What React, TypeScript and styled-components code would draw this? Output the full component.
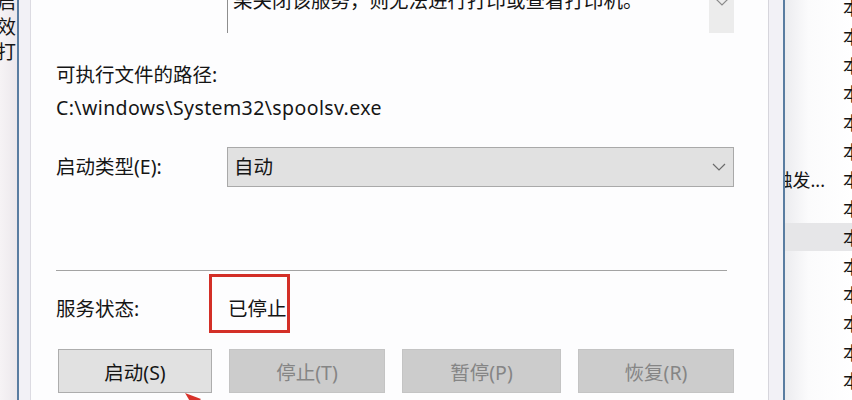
import React from 'react';
import styled, { createGlobalStyle } from 'styled-components';

const GlobalStyle = createGlobalStyle`
  html, body {
    margin: 0;
    padding: 0;
    background: #ffffff;
  }
  body {
    font-family: "Noto Sans", "Noto Sans CJK SC", sans-serif;
  }
`;

const leftRows = ['启', '效', '打'];
const rightRows = Array.from({ length: 15 }, (_, i) => i);

const Chevron = ({ color = '#6b6b6b' }: { color?: string }): JSX.Element => (
  <svg width="14" height="8" viewBox="0 0 14 8">
    <polyline points="1,1 7,7 13,1" fill="none" stroke={color} strokeWidth="1.2" />
  </svg>
);

const App = (): JSX.Element => {
  return (
    <Screen>
      <GlobalStyle />
      <BackLeft>
        {leftRows.map((ch) => (
          <BackLeftRow key={ch}>
            <span>{`服务${ch}`}</span>
          </BackLeftRow>
        ))}
      </BackLeft>

      <Dialog>
        <Content>
          <FieldRow>
            <span />
            <DescBox>
              <DescText>果关闭该服务，则无法进行打印或查看打印机。</DescText>
              <DescScroll>
                <Chevron color="#8a8a8a" />
              </DescScroll>
            </DescBox>
          </FieldRow>

          <PathLabel>可执行文件的路径:</PathLabel>
          <PathValue>C:\windows\System32\spoolsv.exe</PathValue>

          <FieldRow>
            <Label>启动类型(E):</Label>
            <Select>
              <span>自动</span>
              <Chevron />
            </Select>
          </FieldRow>

          <Separator />

          <StatusRow>
            <Label>服务状态:</Label>
            <StatusValue>已停止</StatusValue>
          </StatusRow>

          <ButtonRow>
            <ActionButton width={154}>启动(S)</ActionButton>
            <ActionButton width={156} disabled>
              停止(T)
            </ActionButton>
            <ActionButton width={159} disabled>
              暂停(P)
            </ActionButton>
            <ActionButton width={156} disabled>
              恢复(R)
            </ActionButton>
          </ButtonRow>
        </Content>
      </Dialog>

      <BackRight>
        {rightRows.map((i) => (
          <ServiceRow key={i} highlight={i === 8}>
            <StartCell>{i === 6 ? '手动(触发...' : ''}</StartCell>
            <LogonCell>本地系统</LogonCell>
          </ServiceRow>
        ))}
      </BackRight>

      <ArrowTip width="20" height="10" viewBox="0 0 20 10">
        <polygon points="0,0 16,6 12,10 6,10" fill="#d8332b" />
      </ArrowTip>
    </Screen>
  );
};

const Screen = styled.div`
  position: relative;
  width: 852px;
  height: 400px;
  display: flex;
  overflow: hidden;
  color: #151515;
  font-size: 19.5px;
`;

const BackLeft = styled.div`
  flex: 0 0 17px;
  width: 17px;
  min-width: 0;
  overflow: hidden;
  background: linear-gradient(to right, #f6f3f5, #ece8ec);
  display: flex;
  flex-direction: column;
  margin-top: -10px;
`;

const BackLeftRow = styled.div`
  height: 25px;
  display: flex;
  justify-content: flex-end;
  overflow: hidden;
  white-space: nowrap;
  font-size: 19px;
  line-height: 25px;
  padding-right: 1px;
`;

const Dialog = styled.div`
  flex: 0 0 768px;
  box-sizing: border-box;
  border-left: 2px solid #5a7da1;
  border-right: 2px solid #5a7da1;
  padding: 0 14px 0 11px;
  background: #f2f1f6;
  display: flex;
`;

const Content = styled.div`
  flex: 1;
  min-width: 0;
  background: #fdfdfe;
  border-left: 1px solid #dcdbe2;
  border-right: 1px solid #d6d5dc;
  padding: 0 34px 0 25px;
  display: flex;
  flex-direction: column;
`;

const FieldRow = styled.div`
  display: grid;
  grid-template-columns: 171px 1fr;
  align-items: center;
  margin-top: 27px;

  &:first-child {
    margin-top: -20px;
  }
`;

const DescBox = styled.div`
  height: 53px;
  border-left: 1px solid #8e8e8e;
  display: flex;
  justify-content: space-between;
  overflow: hidden;
`;

const DescText = styled.div`
  padding: 9px 0 0 5px;
  line-height: 24px;
  white-space: nowrap;
`;

const DescScroll = styled.div`
  flex: 0 0 25px;
  background: #ececec;
  display: flex;
  align-items: flex-end;
  justify-content: center;
  padding-bottom: 27px;
  box-sizing: border-box;
`;

const Label = styled.div`
  line-height: 24px;
  white-space: nowrap;
`;

const PathLabel = styled(Label)`
  margin-top: 30px;
`;

const PathValue = styled(Label)`
  margin-top: 9px;
  letter-spacing: 0.4px;
`;

const Select = styled.div`
  height: 40px;
  box-sizing: border-box;
  background: #e1e1e1;
  border: 1px solid #a9a9a9;
  display: flex;
  align-items: center;
  justify-content: space-between;
  padding: 0 7px 0 6px;
  line-height: 24px;
`;

const Separator = styled.div`
  height: 1px;
  background: #a3a3a3;
  margin-top: 83px;
  margin-right: 7px;
`;

const StatusRow = styled.div`
  display: grid;
  grid-template-columns: 171px 1fr;
  height: 59px;
  margin-top: 3px;
  padding-top: 23px;
  box-sizing: border-box;
`;

const StatusValue = styled.div`
  position: relative;
  line-height: 24px;
  padding-left: 1px;

  &::before {
    content: '';
    position: absolute;
    left: -18px;
    top: -23px;
    width: 81px;
    height: 59px;
    box-sizing: border-box;
    border: 3px solid #d32f27;
  }
`;

const ButtonRow = styled.div`
  display: flex;
  justify-content: space-between;
  margin: 16px 0 0 2px;
`;

const ActionButton = styled.button<{ width: number }>`
  width: ${({ width }) => width}px;
  height: 44px;
  font: inherit;
  color: ${({ disabled }) => (disabled ? '#858585' : '#151515')};
  background: ${({ disabled }) => (disabled ? '#cccccc' : '#e1e1e1')};
  border: 1px solid ${({ disabled }) => (disabled ? '#c4c4c4' : '#adadad')};
  padding: 0;
`;

const BackRight = styled.div`
  flex: 1;
  min-width: 0;
  overflow: hidden;
  background: linear-gradient(to right, #ececef, #fbfbfc 35%, #ffffff);
  display: flex;
  flex-direction: column;
  margin-top: -7px;
`;

const ServiceRow = styled.div<{ highlight?: boolean }>`
  flex: 0 0 28.7px;
  display: grid;
  grid-template-columns: 40px 18px 1fr;
  align-items: center;
  font-size: 18px;
  background: ${({ highlight }) => (highlight ? '#e6e6e8' : 'transparent')};
`;

const StartCell = styled.div`
  display: flex;
  justify-content: flex-end;
  overflow: hidden;
  white-space: nowrap;
`;

const LogonCell = styled.div`
  grid-column: 3;
  overflow: hidden;
  white-space: nowrap;
`;

const ArrowTip = styled.svg`
  position: absolute;
  left: 185px;
  top: 393px;
`;

export default App;
